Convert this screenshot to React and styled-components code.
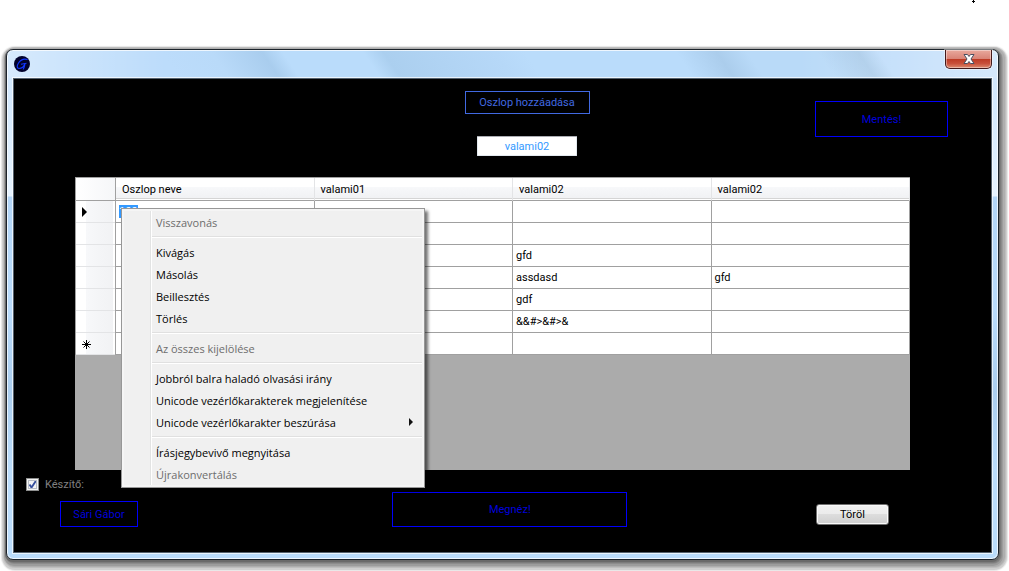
import React, { useState } from 'react'
import styled, { createGlobalStyle } from 'styled-components'

const GlobalStyle = createGlobalStyle`
	* {
		box-sizing: border-box;
	}

	body {
		margin: 0;
		background-color: #fff;
		font-family: Roboto, "Liberation Sans", Arial, sans-serif;
		font-size: 11px;
	}

	button, input {
		font-family: inherit;
		font-size: inherit;
	}
`

const Page = styled.div`
	display: flex;
	flex-direction: column;
	min-height: 100vh;
	padding: 0 10px 11px 6px;
`

const Desktop = styled.div`
	display: flex;
	justify-content: flex-end;
	height: 49px;
	padding-right: 24px;
`

const Window = styled.div`
	flex: 1;
	display: flex;
	flex-direction: column;
	border: 1px solid #1c232b;
	border-radius: 7px;
	padding: 0 6px 6px;
	background:
		linear-gradient(to right, rgba(255,255,255,.4), rgba(255,255,255,0) 16%, rgba(255,255,255,0) 80%, rgba(255,255,255,.4)) 0 0 / 100% 28px no-repeat,
		linear-gradient(56deg, #bcdcfb 0 17%, #b9daf9 22%, #a9cdee 27%, #badcfb 29% 37%, #abcfef 39%, #b6d8f8 50%, #badcfb 53% 68%, #abcdec 72%, #b9daf8 75% 82%, #a8cae9 86%, #badafa 88%) 0 0 / 100% 28px no-repeat,
		linear-gradient(to bottom, #cfe4fb, #d4e9fd 60px, #e6f3ff 146px, #b2d5f7 147px, #b9dbfb 260px, #aacdee 340px, #badcfb 420px);
	box-shadow:
		inset 0 0 0 1px rgba(255,255,255,.75),
		0 1px 0 1px #6a6a6a,
		1px 2px 0 1px #7c7c7c,
		1px 2px 0 2px #8c8c8c,
		1px 3px 0 3px #9c9c9c,
		2px 3px 0 4px #aeaeae,
		2px 3px 0 5px #bebebe,
		2px 4px 0 6px #cfcfcf,
		2px 4px 1px 7px #e6e6e6;
`

const TitleBar = styled.div`
	display: flex;
	justify-content: space-between;
	align-items: flex-start;
	height: 28px;
`

const AppIcon = styled.svg`
	width: 16px;
	height: 16px;
	margin: 6px 1px;
`

const CloseButton = styled.button`
	display: flex;
	align-items: center;
	justify-content: center;
	width: 47px;
	height: 19px;
	padding: 0;
	border: 1px solid #431a1c;
	border-top: none;
	border-radius: 0 0 5px 5px;
	background: linear-gradient(to bottom, #e9a99d, #d98477 48%, #bd3a24 50%, #c8503a 75%, #dd8b6f);
	box-shadow: inset 0 0 0 1px rgba(255,255,255,.4), 0 0 0 1px rgba(255,255,255,.4);
`

const Client = styled.div`
	flex: 1;
	display: flex;
	flex-direction: column;
	border: 1px solid #54616e;
	outline: 1px solid rgba(255,255,255,.7);
	background-color: #000;
`

const Toolbar = styled.div`
	display: grid;
	grid-template-columns: 1fr 125px 1fr;
	padding: 12px 43px 21px 92px;
`

const ColumnForm = styled.div`
	grid-column: 2;
	display: flex;
	flex-direction: column;
	align-items: center;
	row-gap: 22px;
`

const FlatButton = styled.button`
	width: ${({ $width }) => $width}px;
	height: ${({ $height }) => $height}px;
	padding: 0;
	border: 1px solid ${({ $border }) => $border || '#0000fa'};
	background-color: transparent;
	color: ${({ $color }) => $color || '#0000dc'};
`

const SaveButton = styled(FlatButton)`
	justify-self: end;
	margin-top: 10px;
`

const NameInput = styled.input`
	width: 100px;
	height: 20px;
	padding: 0;
	border: 1px solid #e3e9ef;
	border-top-color: #abadb3;
	border-radius: 1px;
	background-color: #fff;
	color: #3399ff;
	text-align: center;
`

const GridPanel = styled.div`
	flex: 1;
	min-height: 293px;
	margin: 0 81px 0 61px;
	background-color: #ababab;
`

const DataTable = styled.table`
	width: 100%;
	table-layout: fixed;
	border-collapse: separate;
	border-spacing: 0;
	border-top: 1px solid #a0a0a0;
	border-left: 1px solid #a0a0a0;
`

const CornerCell = styled.td`
	width: 40px;
	padding: 0;
	border-right: 1px solid #a0a0a0;
	border-bottom: 1px solid #a0a0a0;
	background: linear-gradient(to right, #fff, #f5f6f8);
`

const HeadCell = styled.th`
	height: 23px;
	padding: 0 6px;
	border-right: 1px solid #e3e4e6;
	border-bottom: 1px solid #a0a0a0;
	background: linear-gradient(to bottom, #fff 0 9px, #f7f8fa 9px, #f1f2f4 20px, #d5d5d5 20px 21px, #fff 21px);
	color: #000;
	font-weight: normal;
	text-align: left;
`

const RowHead = styled.th`
	height: 22px;
	padding: 0 0 0 6px;
	border-right: 1px solid #a0a0a0;
	background: linear-gradient(to right, #fff 0 10px, #f7f8fa 10px, #f1f2f4 37px, #fff 37px);
	box-shadow: inset 0 -1px 0 #e3e4e6;
	text-align: left;

	svg {
		display: block;
	}
`

const Cell = styled.td`
	position: relative;
	height: 22px;
	padding: 0 3px;
	border-right: 1px solid #a0a0a0;
	border-bottom: 1px solid #a0a0a0;
	background-color: #fff;
	color: #000;
`

const Selected = styled.span`
	display: block;
	width: 19px;
	height: 13px;
	background-color: #3399ff;
	color: #fff;
	line-height: 13px;
`

const Menu = styled.div`
	position: absolute;
	z-index: 10;
	top: 7px;
	left: 5px;
	width: 304px;
	padding: 2px;
	border: 1px solid #979797;
	background: linear-gradient(to right, #f0f0f0 0 28px, #e2e3e3 28px 29px, #fff 29px 30px, #f0f0f0 30px);
	box-shadow: inset 0 0 0 2px #f5f5f5, 3px 3px 3px rgba(0,0,0,.55);
`

const MenuItem = styled.button`
	display: flex;
	align-items: center;
	justify-content: space-between;
	width: 100%;
	height: 22px;
	padding: 0 9px 0 32px;
	border: none;
	background-color: transparent;
	color: #000;
	font-family: "Open Sans", "Noto Sans", sans-serif;
	font-size: 11px;
	white-space: nowrap;

	&:disabled {
		color: #6d6d6d;
	}
`

const MenuLine = styled.hr`
	height: 2px;
	margin: 3px 0 3px 28px;
	border: none;
	border-top: 1px solid #e0e0e0;
	border-bottom: 1px solid #fff;
`

const Footer = styled.div`
	display: grid;
	grid-template-columns: 7fr 235px 5fr;
	height: 82px;
	padding: 8px 102px 0 12px;
`

const Author = styled.div`
	display: flex;
	flex-direction: column;
	align-items: flex-start;
	row-gap: 10px;
`

const CheckLabel = styled.label`
	display: flex;
	align-items: center;
	column-gap: 6px;
	height: 13px;
	color: #808080;
`

const CheckBox = styled.input`
	appearance: none;
	width: 13px;
	height: 13px;
	margin: 0;
	border: 1px solid #8e8f8f;
	background-color: #f4f4f4;
	box-shadow: inset 0 0 0 1px #f4f4f4, inset 0 0 0 2px #b8bcc4;

	&:checked {
		background-image: url("data:image/svg+xml,%3Csvg xmlns='http://www.w3.org/2000/svg' viewBox='0 0 11 11'%3E%3Cpath d='M2.5 5.5 4.5 8.5 8.8 2' fill='none' stroke='%23374f9c' stroke-width='1.9'/%3E%3C/svg%3E");
	}
`

const AuthorButton = styled(FlatButton)`
	margin-left: 34px;
`

const ViewButton = styled(FlatButton)`
	margin-top: 14px;
`

const ClearButton = styled.button`
	justify-self: end;
	width: 73px;
	height: 21px;
	margin-top: 26px;
	padding: 0;
	border: 1px solid #707070;
	border-radius: 3px;
	background: linear-gradient(to bottom, #f2f2f2, #ebebeb 49%, #dddddd 50%, #cfcfcf);
	box-shadow: inset 0 0 0 1px #fafafa;
	color: #000;
`

const columns = ['Oszlop neve', 'valami01', 'valami02', 'valami02']

const rows = [
	['100', '', '', ''],
	['', '', '', ''],
	['', '', 'gfd', ''],
	['', '', 'assdasd', 'gfd'],
	['', '', 'gdf', ''],
	['', '', '&&#>&#>&', ''],
	['', '', '', ''],
]

const menuItems = [
	{ text: 'Visszavonás', disabled: true },
	null,
	{ text: 'Kivágás' },
	{ text: 'Másolás' },
	{ text: 'Beillesztés' },
	{ text: 'Törlés' },
	null,
	{ text: 'Az összes kijelölése', disabled: true },
	null,
	{ text: 'Jobbról balra haladó olvasási irány' },
	{ text: 'Unicode vezérlőkarakterek megjelenítése' },
	{ text: 'Unicode vezérlőkarakter beszúrása', submenu: true },
	null,
	{ text: 'Írásjegybevivő megnyitása' },
	{ text: 'Újrakonvertálás', disabled: true },
]

const RowMark = ({ index }) => {
	if (index === 0) {
		return <svg width="6" height="10"><path d="M0 0 5 5 0 10Z" fill="#000" /></svg>
	}
	if (index === rows.length - 1) {
		return (
			<svg width="9" height="9" viewBox="0 0 9 9">
				<path d="M4.5 0v9M0 4.5h9M1.5 1.5l6 6M7.5 1.5l-6 6" stroke="#000" />
			</svg>
		)
	}
	return null
}

const ContextMenu = () => (
	<Menu role="menu">
		{menuItems.map((item, index) => (
			item
				? (
					<MenuItem key={index} role="menuitem" disabled={item.disabled}>
						{item.text}
						{item.submenu && <svg width="4" height="8"><path d="M0 0 4 4 0 8Z" fill="#111" /></svg>}
					</MenuItem>
				)
				: <MenuLine key={index} />
		))}
	</Menu>
)

const DataGrid = () => (
	<GridPanel>
		<DataTable>
			<thead>
				<tr>
					<CornerCell />
					{columns.map((name, index) => <HeadCell key={index}>{name}</HeadCell>)}
				</tr>
			</thead>
			<tbody>
				{rows.map((row, rowIndex) => (
					<tr key={rowIndex}>
						<RowHead><RowMark index={rowIndex} /></RowHead>
						{row.map((value, index) => (
							<Cell key={index}>
								{rowIndex === 0 && index === 0
									? <><Selected>{value}</Selected><ContextMenu /></>
									: value}
							</Cell>
						))}
					</tr>
				))}
			</tbody>
		</DataTable>
	</GridPanel>
)

const App = () => {
	const [columnName, setColumnName] = useState('valami02')
	const [checked, setChecked] = useState(true)

	return (
		<Page>
			<GlobalStyle />
			<Desktop>
				<svg width="3" height="3"><path d="M1.5 0v3M0 1.5h3" stroke="#000" /></svg>
			</Desktop>
			<Window>
				<TitleBar>
					<AppIcon viewBox="0 0 16 16">
						<circle cx="8" cy="8" r="8" fill="#02022c" />
						<path d="M13.5 3.5C10 2.500 6.500 4 4.500 7C2.500 10 3 12.500 5 12.500C7.500 12.500 10 10.500 11 7.500M7 8.300 12.500 7.300M11 7.500C10.500 10 10.500 11.500 9 13.500" fill="none" stroke="#1236ff" strokeWidth="1.1" />
					</AppIcon>
					<CloseButton aria-label="Bezárás">
						<svg width="12" height="10" viewBox="0 0 12 10">
							<path d="M1 .5h3.500L6 2.500 7.500.500H11L8 5l3 4.500H7.500L6 7.500 4.500 9.500H1L4 5Z" fill="#fff" stroke="#4a4f60" />
						</svg>
					</CloseButton>
				</TitleBar>
				<Client>
					<Toolbar>
						<ColumnForm>
							<FlatButton $width={125} $height={23} $border="#4169e1" $color="#4169e1">Oszlop hozzáadása</FlatButton>
							<NameInput
								aria-label="Oszlop neve"
								value={columnName}
								onChange={(e) => setColumnName(e.target.value)}
							/>
						</ColumnForm>
						<SaveButton $width={133} $height={36}>Mentés!</SaveButton>
					</Toolbar>
					<DataGrid />
					<Footer>
						<Author>
							<CheckLabel>
								<CheckBox type="checkbox" checked={checked} onChange={() => setChecked(!checked)} />
								Készítő:
							</CheckLabel>
							<AuthorButton $width={78} $height={26}>Sári Gábor</AuthorButton>
						</Author>
						<ViewButton $width={235} $height={35}>Megnéz!</ViewButton>
						<ClearButton>Töröl</ClearButton>
					</Footer>
				</Client>
			</Window>
		</Page>
	)
}

export default App
